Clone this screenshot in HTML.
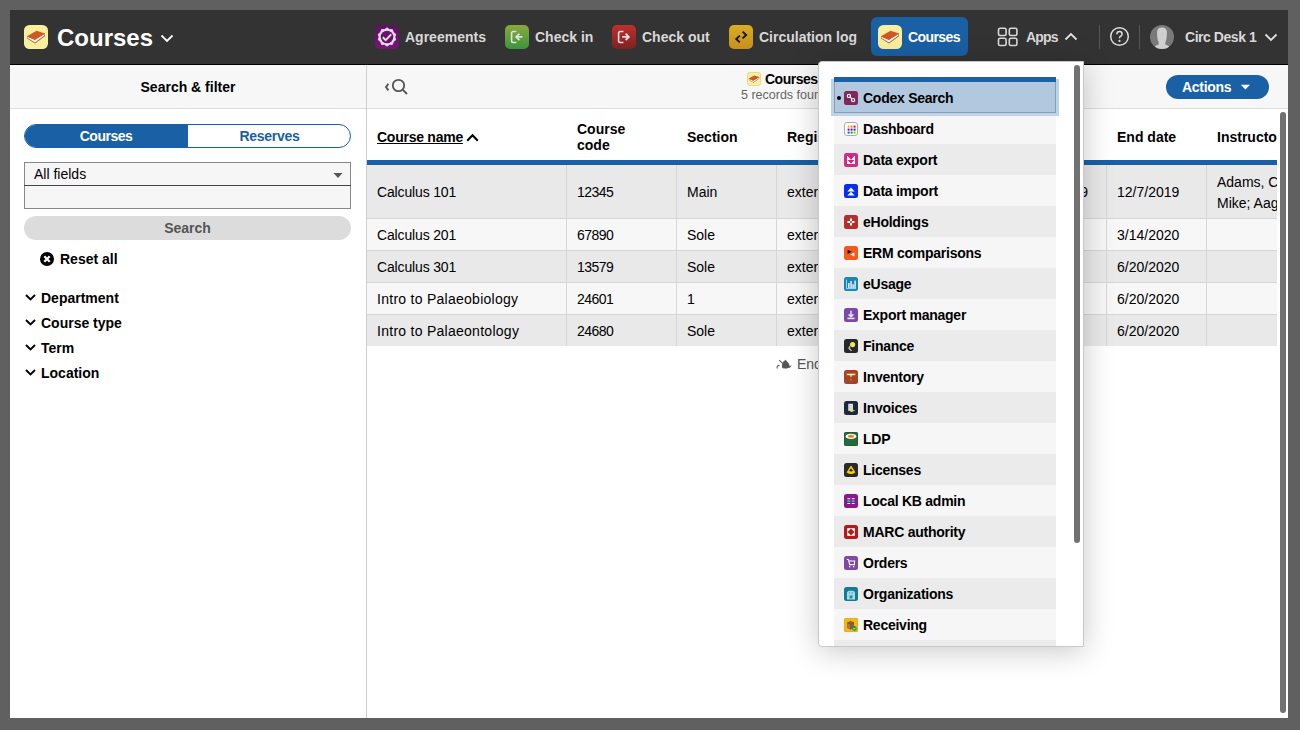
<!DOCTYPE html>
<html><head><meta charset="utf-8">
<style>
*{box-sizing:border-box;margin:0;padding:0}
html,body{width:1300px;height:730px;overflow:hidden;background:#606060;font-family:"Liberation Sans",sans-serif;font-size:14px;color:#000}
.abs{position:absolute}
.t{position:absolute;white-space:nowrap;line-height:20px}
.b{font-weight:700}
#nav{position:absolute;left:10px;top:10px;width:1278px;height:55px;background:#333;border-bottom:1px solid #000}
.navtxt{color:#d8d8d8;font-weight:700;font-size:14px}
.icon24{position:absolute;width:24px;height:24px}
#left{position:absolute;left:10px;top:65px;width:356px;height:653px;background:#fff}
#lhead{position:absolute;left:0;top:0;width:356px;height:44px;background:#f7f7f7;border-bottom:1px solid #ddd}
#divider{position:absolute;left:366px;top:65px;width:1px;height:653px;background:#cfcfcf}
#right{position:absolute;left:367px;top:65px;width:921px;height:653px;background:#fff;overflow:hidden}
#rhead{position:absolute;left:0;top:0;width:921px;height:44px;background:#f7f7f7;border-bottom:1px solid #ddd}
</style></head><body>
<div id="nav">
<div class="icon24" style="left:14px;top:15px"><svg width="24" height="24" viewBox="0 0 24 24"><rect x="0" y="0" width="24" height="24" rx="5.5" fill="#f8f09c"/><path d="M2.9 11.4 L3.1 13.4 L11 18.4 L21 11.2 L20.9 8.6 Z" fill="#b8572c"/><path d="M3.3 11.8 L3.5 13.1 L11 17.5 L20.5 10.6 L20.5 9 L10.9 14.5 Z" fill="#eef2f6"/><path d="M2.9 11.2 L12.6 5.8 L21 8.4 L10.8 14.9 Z" fill="#cf5821"/></svg></div>
<div class="t b" style="left:47px;top:13px;font-size:24px;line-height:30px;color:#fff">Courses</div>
<svg class="abs" style="left:150px;top:24px" width="14" height="9" viewBox="0 0 14 9"><path d="M1.5 1.5 L7 7 L12.5 1.5" fill="none" stroke="#fff" stroke-width="1.8"/></svg>

<div class="icon24" style="left:365px;top:15px"><svg width="24" height="24" viewBox="0 0 24 24"><defs><linearGradient id="gag" x1="0" y1="0" x2="0" y2="1"><stop offset="0" stop-color="#5c1360"/><stop offset="1" stop-color="#7a1279"/></linearGradient></defs><rect width="24" height="24" rx="5" fill="url(#gag)"/><path d="M12.00 2.80 L14.44 4.49 L17.41 4.56 L18.39 7.36 L20.75 9.16 L19.90 12.00 L20.75 14.84 L18.39 16.64 L17.41 19.44 L14.44 19.51 L12.00 21.20 L9.56 19.51 L6.59 19.44 L5.61 16.64 L3.25 14.84 L4.10 12.00 L3.25 9.16 L5.61 7.36 L6.59 4.56 L9.56 4.49 Z" fill="#e4dee4" stroke="#e4dee4" stroke-width="0.8" stroke-linejoin="round"/><circle cx="12" cy="12" r="6.3" fill="#6a136e"/><path d="M7.8 12.2 L10.7 15.1 L16.2 9.4" fill="none" stroke="#e4dee4" stroke-width="2"/></svg></div>
<div class="t navtxt" style="left:395px;top:17px">Agreements</div>

<div class="icon24" style="left:495px;top:15px"><svg width="24" height="24" viewBox="0 0 24 24"><defs><linearGradient id="gci" x1="0" y1="0" x2="0" y2="1"><stop offset="0" stop-color="#8aa83c"/><stop offset="1" stop-color="#3a963c"/></linearGradient></defs><rect width="24" height="24" rx="5" fill="url(#gci)"/><path d="M11.4 6.5 L8.3 6.5 Q6.6 6.5 6.6 8.2 L6.6 15.8 Q6.6 17.5 8.3 17.5 L11.4 17.5" fill="none" stroke="#e0e0e0" stroke-width="1.6"/><path d="M17.4 11.9 L11.2 11.9 M14.4 8.6 L11.1 11.9 L14.4 15.2" fill="none" stroke="#e0e0e0" stroke-width="1.8"/></svg></div>
<div class="t navtxt" style="left:525px;top:17px">Check in</div>

<div class="icon24" style="left:602px;top:15px"><svg width="24" height="24" viewBox="0 0 24 24"><defs><linearGradient id="gco" x1="0" y1="0" x2="0" y2="1"><stop offset="0" stop-color="#c22e2e"/><stop offset="1" stop-color="#7c2222"/></linearGradient></defs><rect width="24" height="24" rx="5" fill="url(#gco)"/><path d="M11.4 6.5 L8.3 6.5 Q6.6 6.5 6.6 8.2 L6.6 15.8 Q6.6 17.5 8.3 17.5 L11.4 17.5" fill="none" stroke="#e0e0e0" stroke-width="1.6"/><path d="M10.2 11.9 L16.8 11.9 M13.6 8.6 L16.9 11.9 L13.6 15.2" fill="none" stroke="#e0e0e0" stroke-width="1.8"/></svg></div>
<div class="t navtxt" style="left:632px;top:17px">Check out</div>

<div class="icon24" style="left:719px;top:15px"><svg width="24" height="24" viewBox="0 0 24 24"><defs><linearGradient id="gcl" x1="0" y1="0" x2="0" y2="1"><stop offset="0" stop-color="#d8ad26"/><stop offset="1" stop-color="#c98f1a"/></linearGradient></defs><rect width="24" height="24" rx="5" fill="url(#gcl)"/><path d="M10.8 10.6 L7.2 14 L10.8 17.4" fill="none" stroke="#111" stroke-width="1.8"/><path d="M13.6 6.6 L17.2 10 L13.6 13.4" fill="none" stroke="#111" stroke-width="1.8"/></svg></div>
<div class="t navtxt" style="left:749px;top:17px">Circulation log</div>

<div class="abs" style="left:861px;top:7px;width:97px;height:39px;background:#1960a4;border-radius:6px"></div>
<div class="icon24" style="left:868px;top:15px"><svg width="24" height="24" viewBox="0 0 24 24"><rect x="0" y="0" width="24" height="24" rx="5.5" fill="#f8f09c"/><path d="M2.9 11.4 L3.1 13.4 L11 18.4 L21 11.2 L20.9 8.6 Z" fill="#b8572c"/><path d="M3.3 11.8 L3.5 13.1 L11 17.5 L20.5 10.6 L20.5 9 L10.9 14.5 Z" fill="#eef2f6"/><path d="M2.9 11.2 L12.6 5.8 L21 8.4 L10.8 14.9 Z" fill="#cf5821"/></svg></div>
<div class="t b" style="left:898px;top:17px;color:#fff;letter-spacing:-0.6px">Courses</div>

<svg class="abs" style="left:987px;top:17px" width="22" height="20" viewBox="0 0 22 20"><g fill="none" stroke="#d9d9d9" stroke-width="1.6"><rect x="1.5" y="1.3" width="7.6" height="7.2" rx="1.6"/><rect x="12.3" y="1.3" width="7.6" height="7.2" rx="1.6"/><rect x="1.5" y="11.3" width="7.6" height="7.2" rx="1.6"/><rect x="12.3" y="11.3" width="7.6" height="7.2" rx="1.6"/></g></svg>
<div class="t navtxt" style="left:1016px;top:17px;letter-spacing:-0.8px">Apps</div>
<svg class="abs" style="left:1054px;top:22px" width="14" height="9" viewBox="0 0 14 9"><path d="M1.5 7.5 L7 2 L12.5 7.5" fill="none" stroke="#e0e0e0" stroke-width="1.8"/></svg>

<div class="abs" style="left:1089px;top:15px;width:1px;height:24px;background:#555"></div>
<svg class="abs" style="left:1099px;top:16px" width="21" height="21" viewBox="0 0 21 21"><circle cx="10.5" cy="10.5" r="8.8" fill="none" stroke="#ddd" stroke-width="1.5"/><path d="M7.9 8.3 Q7.9 5.6 10.5 5.6 Q13.1 5.6 13.1 8 Q13.1 9.5 11.6 10.2 Q10.5 10.8 10.5 12.2" fill="none" stroke="#ddd" stroke-width="1.5"/><circle cx="10.5" cy="14.9" r="1.1" fill="#ddd"/></svg>
<div class="abs" style="left:1129px;top:15px;width:1px;height:24px;background:#555"></div>
<svg class="abs" style="left:1140px;top:15px" width="24" height="24" viewBox="0 0 24 24"><defs><clipPath id="avc"><circle cx="12" cy="12" r="12"/></clipPath></defs><circle cx="12" cy="12" r="12" fill="#7a7a7a"/><g clip-path="url(#avc)" fill="#cfcfcf"><path d="M7 8 Q7 2.6 12 2.6 Q17 2.6 17 8 L16.6 13 Q16.2 15.8 15.3 17.4 L15.4 19.8 Q19.6 20.6 20.8 24 L3.2 24 Q4.4 20.6 8.6 19.8 L8.7 17.4 Q7.8 15.8 7.4 13 Z"/></g></svg>
<div class="t navtxt" style="left:1175px;top:17px;letter-spacing:-0.45px">Circ Desk 1</div>
<svg class="abs" style="left:1254px;top:23px" width="14" height="9" viewBox="0 0 14 9"><path d="M1.5 1.5 L7 7 L12.5 1.5" fill="none" stroke="#e0e0e0" stroke-width="1.8"/></svg>
</div>
<div id="left"><div id="lhead"></div></div>
<div class="t b" style="left:10px;width:356px;text-align:center;top:77px">Search &amp; filter</div>
<div class="abs" style="left:24px;top:124px;width:327px;height:24px;border:1px solid #1960a4;border-radius:12px;overflow:hidden;background:#fff"><div class="abs" style="left:0;top:0;width:163px;height:24px;background:#1960a4"></div></div>
<div class="t b" style="left:24px;width:164px;text-align:center;top:126px;color:#fff;letter-spacing:-0.5px">Courses</div>
<div class="t b" style="left:188px;width:163px;text-align:center;top:126px;color:#1960a4;letter-spacing:-0.3px">Reserves</div>
<div class="abs" style="left:24px;top:162px;width:327px;height:47px;border:1px solid #888;background:#f6f6f6"></div>
<div class="abs" style="left:24px;top:185px;width:327px;height:1px;background:#444"></div>
<div class="t" style="left:34px;top:164px;color:#000">All fields</div>
<svg class="abs" style="left:333px;top:172px" width="10" height="7" viewBox="0 0 10 7"><path d="M0.5 1 L9.5 1 L5 6 Z" fill="#555"/></svg>
<div class="abs" style="left:24px;top:216px;width:327px;height:24px;border-radius:12px;background:#dcdcdc"></div>
<div class="t b" style="left:24px;width:327px;text-align:center;top:218px;color:#555">Search</div>
<svg class="abs" style="left:40px;top:252px" width="14" height="14" viewBox="0 0 14 14"><circle cx="7" cy="7" r="7" fill="#000"/><path d="M4.3 4.3 L9.7 9.7 M9.7 4.3 L4.3 9.7" stroke="#fff" stroke-width="2.2"/></svg>
<div class="t b" style="left:60px;top:249px">Reset all</div>
<svg class="abs" style="left:25px;top:294px" width="11" height="7" viewBox="0 0 11 7"><path d="M1 1 L5.5 5.5 L10 1" fill="none" stroke="#000" stroke-width="1.9"/></svg>
<div class="t b" style="left:41px;top:288px">Department</div>
<svg class="abs" style="left:25px;top:319px" width="11" height="7" viewBox="0 0 11 7"><path d="M1 1 L5.5 5.5 L10 1" fill="none" stroke="#000" stroke-width="1.9"/></svg>
<div class="t b" style="left:41px;top:313px">Course type</div>
<svg class="abs" style="left:25px;top:344px" width="11" height="7" viewBox="0 0 11 7"><path d="M1 1 L5.5 5.5 L10 1" fill="none" stroke="#000" stroke-width="1.9"/></svg>
<div class="t b" style="left:41px;top:338px">Term</div>
<svg class="abs" style="left:25px;top:369px" width="11" height="7" viewBox="0 0 11 7"><path d="M1 1 L5.5 5.5 L10 1" fill="none" stroke="#000" stroke-width="1.9"/></svg>
<div class="t b" style="left:41px;top:363px">Location</div>

<div id="divider"></div>
<div id="divider"></div>
<div id="right"><div id="rhead"></div>
<svg class="abs" style="left:16px;top:12px" width="28" height="20" viewBox="0 0 28 20"><path d="M5.4 6.8 L3 10.1 L5.4 13.4" fill="none" stroke="#555" stroke-width="1.9"/><circle cx="15.5" cy="8.5" r="5.7" fill="none" stroke="#555" stroke-width="1.8"/><path d="M19.6 12.6 L24 17" stroke="#555" stroke-width="1.9"/></svg>
<div class="abs" style="left:380px;top:7px;width:14px;height:14px"><svg width="14" height="14" viewBox="0 0 24 24"><rect x="0.6" y="0.6" width="22.8" height="22.8" rx="5" fill="#f8f09c" stroke="#d9c978" stroke-width="1.2"/><path d="M2.9 11.4 L3.1 13.4 L11 18.4 L21 11.2 L20.9 8.6 Z" fill="#b8572c"/><path d="M3.3 11.8 L3.5 13.1 L11 17.5 L20.5 10.6 L20.5 9 L10.9 14.5 Z" fill="#eef2f6"/><path d="M2.9 11.2 L12.6 5.8 L21 8.4 L10.8 14.9 Z" fill="#cf5821"/></svg></div>
<div class="t" style="left:398px;top:4px;font-weight:700;letter-spacing:-0.5px">Courses</div>
<div class="t" style="left:374px;top:20px;font-size:12.5px;color:#666">5 records found</div>
<div class="abs" style="left:799px;top:10px;width:103px;height:24px;background:#1960a4;border-radius:12px"></div>
<div class="t" style="left:815px;top:12px;font-weight:700;color:#fff;letter-spacing:-0.3px">Actions</div>
<svg class="abs" style="left:873px;top:19px" width="11" height="7" viewBox="0 0 11 7"><path d="M0.8 0.8 L10 0.8 L5.4 5.6 Z" fill="#fff"/></svg>
<div class="abs" style="left:0;top:0;width:910px;height:653px;overflow:hidden">
<div class="t" style="left:10px;top:62px;font-weight:700;text-decoration:underline;letter-spacing:-0.25px">Course name</div>
<svg class="abs" style="left:99px;top:68px" width="13" height="9" viewBox="0 0 13 9"><path d="M1.2 7.8 L6.5 2.2 L11.8 7.8" fill="none" stroke="#000" stroke-width="2"/></svg>
<div class="t" style="left:210px;top:56px;font-weight:700;line-height:16px">Course<br>code</div>
<div class="t" style="left:320px;top:62px;font-weight:700">Section</div>
<div class="t" style="left:420px;top:62px;font-weight:700">Registrar ID</div>
<div class="t" style="left:550px;top:62px;font-weight:700">Number of reserves</div>
<div class="t" style="left:650px;top:62px;font-weight:700">Start date</div>
<div class="t" style="left:750px;top:62px;font-weight:700">End date</div>
<div class="t" style="left:850px;top:62px;font-weight:700">Instructors</div>
<div class="abs" style="left:0px;top:95px;width:910px;height:5px;background:#1960a4"></div>
<div class="abs" style="left:0px;top:100px;width:910px;height:54px;background:#e9e9e9;border-bottom:1px solid #d6d6d6;"></div>
<div class="t" style="left:10px;top:117px;letter-spacing:-0.15px">Calculus 101</div>
<div class="t" style="left:210px;top:117px;letter-spacing:-0.55px">12345</div>
<div class="t" style="left:320px;top:117px;">Main</div>
<div class="t" style="left:420px;top:117px;">external-1</div>
<div class="t" style="left:750px;top:117px;">12/7/2019</div>
<div class="t" style="left:850px;top:107px;line-height:21px">Adams, Chris;<br>Mike; Aaglund</div>
<div class="t" style="left:621px;width:100px;text-align:right;top:117px">10/12/2019</div>
<div class="abs" style="left:0px;top:154px;width:910px;height:32px;background:#f7f7f7;border-bottom:1px solid #d6d6d6;"></div>
<div class="t" style="left:10px;top:160px;letter-spacing:-0.15px">Calculus 201</div>
<div class="t" style="left:210px;top:160px;letter-spacing:-0.55px">67890</div>
<div class="t" style="left:320px;top:160px;">Sole</div>
<div class="t" style="left:420px;top:160px;">external-2</div>
<div class="t" style="left:750px;top:160px;">3/14/2020</div>
<div class="abs" style="left:0px;top:186px;width:910px;height:32px;background:#e9e9e9;border-bottom:1px solid #d6d6d6;"></div>
<div class="t" style="left:10px;top:192px;letter-spacing:-0.15px">Calculus 301</div>
<div class="t" style="left:210px;top:192px;letter-spacing:-0.55px">13579</div>
<div class="t" style="left:320px;top:192px;">Sole</div>
<div class="t" style="left:420px;top:192px;">external-3</div>
<div class="t" style="left:750px;top:192px;">6/20/2020</div>
<div class="abs" style="left:0px;top:218px;width:910px;height:32px;background:#f7f7f7;border-bottom:1px solid #d6d6d6;"></div>
<div class="t" style="left:10px;top:224px;letter-spacing:0.27px">Intro to Palaeobiology</div>
<div class="t" style="left:210px;top:224px;letter-spacing:-0.55px">24601</div>
<div class="t" style="left:320px;top:224px;">1</div>
<div class="t" style="left:420px;top:224px;">external-4</div>
<div class="t" style="left:750px;top:224px;">6/20/2020</div>
<div class="abs" style="left:0px;top:250px;width:910px;height:31px;background:#e9e9e9;"></div>
<div class="t" style="left:10px;top:256px;letter-spacing:0.27px">Intro to Palaeontology</div>
<div class="t" style="left:210px;top:256px;letter-spacing:-0.55px">24680</div>
<div class="t" style="left:320px;top:256px;">Sole</div>
<div class="t" style="left:420px;top:256px;">external-5</div>
<div class="t" style="left:750px;top:256px;">6/20/2020</div>
<div class="abs" style="left:199px;top:100px;width:1px;height:181px;background:#d6d6d6"></div>
<div class="abs" style="left:309px;top:100px;width:1px;height:181px;background:#d6d6d6"></div>
<div class="abs" style="left:409px;top:100px;width:1px;height:181px;background:#d6d6d6"></div>
<div class="abs" style="left:539px;top:100px;width:1px;height:181px;background:#d6d6d6"></div>
<div class="abs" style="left:639px;top:100px;width:1px;height:181px;background:#d6d6d6"></div>
<div class="abs" style="left:739px;top:100px;width:1px;height:181px;background:#d6d6d6"></div>
<div class="abs" style="left:839px;top:100px;width:1px;height:181px;background:#d6d6d6"></div>
</div>
<svg class="abs" style="left:409px;top:293px" width="17" height="12" viewBox="0 0 17 12"><path d="M1.2 10.5 Q0.5 7.5 3.5 7.4 M3.2 2 Q5 4.2 6.5 5" fill="none" stroke="#555" stroke-width="1.1"/><path d="M6.4 9.8 Q5.6 5 8.2 3.2 Q9.5 1.5 10.8 3.4 Q13 5.5 13.5 9 Q11 11 6.4 9.8Z M13 9.5 Q15 9.2 15.2 7.5" fill="#555" stroke="#555" stroke-width="0.8"/></svg>
<div class="t" style="left:430px;top:289px;color:#555">End of list</div>
<div class="abs" style="left:913px;top:47px;width:6px;height:601px;background:#717171;border-radius:3px"></div>
</div>
<div class="abs" style="left:818px;top:61px;width:266px;height:586px;background:#fff;border:1px solid #c8c8c8;border-radius:4px 0 0 4px;box-shadow:0 4px 30px rgba(0,0,0,0.22);overflow:hidden">
<div class="abs" style="left:15px;top:20px;width:222px;height:31px;background:#ebebeb"></div>
<div class="abs" style="left:15px;top:51px;width:222px;height:31px;background:#f6f6f6"></div>
<div class="abs" style="left:15px;top:82px;width:222px;height:31px;background:#ebebeb"></div>
<div class="abs" style="left:15px;top:113px;width:222px;height:31px;background:#f6f6f6"></div>
<div class="abs" style="left:15px;top:144px;width:222px;height:31px;background:#ebebeb"></div>
<div class="abs" style="left:15px;top:175px;width:222px;height:31px;background:#f6f6f6"></div>
<div class="abs" style="left:15px;top:206px;width:222px;height:31px;background:#ebebeb"></div>
<div class="abs" style="left:15px;top:237px;width:222px;height:31px;background:#f6f6f6"></div>
<div class="abs" style="left:15px;top:268px;width:222px;height:31px;background:#ebebeb"></div>
<div class="abs" style="left:15px;top:299px;width:222px;height:31px;background:#f6f6f6"></div>
<div class="abs" style="left:15px;top:330px;width:222px;height:31px;background:#ebebeb"></div>
<div class="abs" style="left:15px;top:361px;width:222px;height:31px;background:#f6f6f6"></div>
<div class="abs" style="left:15px;top:392px;width:222px;height:31px;background:#ebebeb"></div>
<div class="abs" style="left:15px;top:423px;width:222px;height:31px;background:#f6f6f6"></div>
<div class="abs" style="left:15px;top:454px;width:222px;height:31px;background:#ebebeb"></div>
<div class="abs" style="left:15px;top:485px;width:222px;height:31px;background:#f6f6f6"></div>
<div class="abs" style="left:15px;top:516px;width:222px;height:31px;background:#ebebeb"></div>
<div class="abs" style="left:15px;top:547px;width:222px;height:31px;background:#f6f6f6"></div>
<div class="abs" style="left:15px;top:578px;width:222px;height:31px;background:#ebebeb"></div>
<div class="abs" style="left:12px;top:17px;width:228px;height:37px;border:3px solid #bcd3ea"></div>
<div class="abs" style="left:15px;top:19px;width:222px;height:32px;background:#b2c8df;border:1px solid #8d9db0"></div>
<div class="abs" style="left:15px;top:15px;width:222px;height:5px;background:#1960a4"></div>
<div class="abs" style="left:18px;top:34px;width:4px;height:4px;border-radius:2px;background:#000"></div>
<svg class="abs" style="left:25px;top:29px" width="14" height="14" viewBox="0 0 14 14"><rect width="14" height="14" rx="2.5" fill="#82275a"/><path d="M5.4 5.4 L8.6 8.6" stroke="#fff" stroke-width="1.1"/><circle cx="4.9" cy="4.9" r="1.6" fill="#82275a" stroke="#fff" stroke-width="1.2"/><circle cx="9.1" cy="9.1" r="1.6" fill="#82275a" stroke="#fff" stroke-width="1.2"/></svg>
<div class="t b" style="left:44px;top:26px;letter-spacing:-0.25px">Codex Search</div>
<svg class="abs" style="left:25px;top:60px" width="14" height="14" viewBox="0 0 14 14"><rect x="0.5" y="0.5" width="13" height="13" rx="2.5" fill="#fff" stroke="#aaa"/><rect x="3.6" y="3.6" width="2" height="2" fill="#fdb000"/><rect x="6.6" y="3.6" width="2" height="2" fill="#f98a00"/><rect x="9.6" y="3.6" width="2" height="2" fill="#e8002a"/><rect x="3.6" y="6.6" width="2" height="2" fill="#a0008f"/><rect x="6.6" y="6.6" width="2" height="2" fill="#5a0fa0"/><rect x="9.6" y="6.6" width="2" height="2" fill="#0040b0"/><rect x="3.6" y="9.6" width="2" height="2" fill="#0066cc"/><rect x="6.6" y="9.6" width="2" height="2" fill="#00a030"/><rect x="9.6" y="9.6" width="2" height="2" fill="#90c800"/></svg>
<div class="t b" style="left:44px;top:57px;letter-spacing:-0.25px">Dashboard</div>
<svg class="abs" style="left:25px;top:91px" width="14" height="14" viewBox="0 0 14 14"><rect width="14" height="14" rx="2.5" fill="#d42a86"/><rect x="3" y="3" width="8" height="8" fill="#fff"/><path d="M3.6 3 L10.4 3 L7 7 Z M3.6 7 L10.4 7 L7 10.8 Z" fill="#d4227e"/></svg>
<div class="t b" style="left:44px;top:88px;letter-spacing:-0.25px">Data export</div>
<svg class="abs" style="left:25px;top:122px" width="14" height="14" viewBox="0 0 14 14"><rect width="14" height="14" rx="2.5" fill="#0a2ef0"/><path d="M7 3.4 L10.6 7.6 L3.4 7.6 Z M7 7.8 L10.6 11.4 L3.4 11.4 Z" fill="#fff"/></svg>
<div class="t b" style="left:44px;top:119px;letter-spacing:-0.25px">Data import</div>
<svg class="abs" style="left:25px;top:153px" width="14" height="14" viewBox="0 0 14 14"><rect width="14" height="14" rx="2.5" fill="#b52e2e"/><path d="M6 3.5 h2 v2.5 h2.5 v2 h-2.5 v2.5 h-2 v-2.5 h-2.5 v-2 h2.5z" fill="#fff"/><circle cx="7" cy="7" r="0.9" fill="#b00"/></svg>
<div class="t b" style="left:44px;top:150px;letter-spacing:-0.25px">eHoldings</div>
<svg class="abs" style="left:25px;top:184px" width="14" height="14" viewBox="0 0 14 14"><rect width="14" height="14" rx="2.5" fill="#f25a1e"/><path d="M3.6 3.8 L7.8 5.8 L3.6 8 Z" fill="#111"/><path d="M10.4 6.6 L10.4 10.6 L6.4 8.6 Z" fill="#fff"/></svg>
<div class="t b" style="left:44px;top:181px;letter-spacing:-0.25px">ERM comparisons</div>
<svg class="abs" style="left:25px;top:215px" width="14" height="14" viewBox="0 0 14 14"><rect width="14" height="14" rx="2.5" fill="#1a86b0"/><path d="M2.5 2.6 L2.5 11.6 L12 11.6" fill="none" stroke="#aee0f0" stroke-width="0.9"/><rect x="4.2" y="6" width="1.3" height="5" fill="#fff"/><rect x="6.4" y="4" width="1.3" height="7" fill="#fff"/><rect x="8.4" y="7.2" width="1.3" height="3.8" fill="#fff"/><rect x="10.4" y="3.6" width="1.3" height="7.4" fill="#fff"/></svg>
<div class="t b" style="left:44px;top:212px;letter-spacing:-0.25px">eUsage</div>
<svg class="abs" style="left:25px;top:246px" width="14" height="14" viewBox="0 0 14 14"><rect width="14" height="14" rx="2.5" fill="#7a48a8"/><path d="M7 2.8 L7 8.2 M4.6 6.4 L7 8.8 L9.4 6.4" fill="none" stroke="#e8e0f0" stroke-width="1.5"/><rect x="3.4" y="9.6" width="7.2" height="1.6" fill="#e8e0f0"/></svg>
<div class="t b" style="left:44px;top:243px;letter-spacing:-0.25px">Export manager</div>
<svg class="abs" style="left:25px;top:277px" width="14" height="14" viewBox="0 0 14 14"><rect width="14" height="14" rx="2.5" fill="#26292c"/><path d="M5.6 7.2 Q3.4 10.4 7.6 11.6 Q5 10.6 5.6 7.2Z" fill="#ccc" stroke="#ccc" stroke-width="0.8"/><circle cx="8.6" cy="5.6" r="2.6" fill="#f2e458"/></svg>
<div class="t b" style="left:44px;top:274px;letter-spacing:-0.25px">Finance</div>
<svg class="abs" style="left:25px;top:308px" width="14" height="14" viewBox="0 0 14 14"><rect width="14" height="14" rx="2.5" fill="#a2432a"/><path d="M2.6 3.6 L11.4 3.6 L11.4 5.2 L8.6 5.2 L7 7.6 L5.4 5.2 L2.6 5.2 Z" fill="#f0c050"/><rect x="3.6" y="4" width="6.8" height="0.9" fill="#fff8d0"/><rect x="6.2" y="9.4" width="1.6" height="1" fill="#e8a040"/></svg>
<div class="t b" style="left:44px;top:305px;letter-spacing:-0.25px">Inventory</div>
<svg class="abs" style="left:25px;top:339px" width="14" height="14" viewBox="0 0 14 14"><rect width="14" height="14" rx="2.5" fill="#1b2a3a"/><rect x="4.3" y="2.8" width="4.6" height="7" fill="#f2f2f6"/><path d="M5 4.6 h3 M5 6.2 h3 M5 7.8 h3" stroke="#aab" stroke-width="0.6"/><circle cx="7.6" cy="9.6" r="1.5" fill="#f0e040"/><path d="M9.2 8.6 L11 9.6 L9.6 10.6 Z" fill="#ddd"/></svg>
<div class="t b" style="left:44px;top:336px;letter-spacing:-0.25px">Invoices</div>
<svg class="abs" style="left:25px;top:370px" width="14" height="14" viewBox="0 0 14 14"><rect width="14" height="14" rx="2.5" fill="#226b3a" stroke="#333" stroke-width="0.6"/><ellipse cx="7" cy="4.4" rx="5.4" ry="2.6" fill="#fff"/><ellipse cx="7" cy="4.3" rx="3" ry="1.5" fill="#ff7a18"/></svg>
<div class="t b" style="left:44px;top:367px;letter-spacing:-0.25px">LDP</div>
<svg class="abs" style="left:25px;top:401px" width="14" height="14" viewBox="0 0 14 14"><rect width="14" height="14" rx="2.5" fill="#2a2a2a"/><path d="M7 3 L11 9.4 Q7 12 3 9.4 Z" fill="#ffd000" stroke="#ffd000" stroke-width="0.8" stroke-linejoin="round"/><path d="M7 5.3 L8.9 8.1 Q7 8.8 5.1 8.1 Z" fill="#1a1a2a"/></svg>
<div class="t b" style="left:44px;top:398px;letter-spacing:-0.25px">Licenses</div>
<svg class="abs" style="left:25px;top:432px" width="14" height="14" viewBox="0 0 14 14"><rect width="14" height="14" rx="2.5" fill="#8a1a8a"/><rect x="3.4" y="4.2" width="2.8" height="1" fill="#fff"/><rect x="7.8" y="4.2" width="2.8" height="1" fill="#fff"/><rect x="3.4" y="6.3" width="2.8" height="1.6" fill="#10d0e0"/><rect x="7.8" y="6.3" width="2.8" height="1.6" fill="#10d0e0"/><rect x="3.4" y="9" width="2.8" height="1" fill="#fff"/><rect x="7.8" y="9" width="2.8" height="1" fill="#fff"/></svg>
<div class="t b" style="left:44px;top:429px;letter-spacing:-0.25px">Local KB admin</div>
<svg class="abs" style="left:25px;top:463px" width="14" height="14" viewBox="0 0 14 14"><rect width="14" height="14" rx="2.5" fill="#b01c1c"/><rect x="3.2" y="3.2" width="7.6" height="7.6" fill="#fff"/><path d="M7 3.6 L10.4 7 L7 10.4 L3.6 7 Z" fill="#b01c1c"/></svg>
<div class="t b" style="left:44px;top:460px;letter-spacing:-0.25px">MARC authority</div>
<svg class="abs" style="left:25px;top:494px" width="14" height="14" viewBox="0 0 14 14"><rect width="14" height="14" rx="2.5" fill="#7d49a6"/><path d="M2.8 3.2 L4.6 3.8 L5.6 8.6 L10.4 8.6 L10.6 5 L5 5" fill="none" stroke="#fff" stroke-width="1.1"/><rect x="5" y="10" width="1.3" height="1.3" fill="#fff"/><rect x="9" y="10" width="1.3" height="1.3" fill="#fff"/></svg>
<div class="t b" style="left:44px;top:491px;letter-spacing:-0.25px">Orders</div>
<svg class="abs" style="left:25px;top:525px" width="14" height="14" viewBox="0 0 14 14"><rect width="14" height="14" rx="2.5" fill="#117d92"/><path d="M3 12 L3 5.2 L4.6 3.8 L9.4 3.8 L11 5.2 L11 12 Z" fill="#a6d8e0"/><path d="M5.6 12 L5.6 8.4 L8.4 8.4 L8.4 12 Z" fill="#1e8ea2"/><rect x="5" y="5" width="1.2" height="1.6" fill="#5fb4c4"/><rect x="7.8" y="5" width="1.2" height="1.6" fill="#5fb4c4"/><path d="M3 12 L11 12" stroke="#d8f0f4" stroke-width="0.8"/></svg>
<div class="t b" style="left:44px;top:522px;letter-spacing:-0.25px">Organizations</div>
<svg class="abs" style="left:25px;top:556px" width="14" height="14" viewBox="0 0 14 14"><rect width="14" height="14" rx="2.5" fill="#f4b814" stroke="#d89a08" stroke-width="0.6"/><path d="M3.2 4.6 L6.6 2.8 L10 4.4 L10 9.8 L6.6 11.6 L3.2 9.9 Z" fill="#8c623c"/><path d="M3.2 4.6 L6.6 6.4 L10 4.4 M6.6 6.4 L6.6 11.6" fill="none" stroke="#5e3e22" stroke-width="0.5"/><path d="M3.6 5.2 L6.2 6.6 L6.2 11 L3.6 9.6Z" fill="#a87a50"/><circle cx="10.4" cy="10.4" r="2.3" fill="#169a38"/><path d="M9.3 10.5 L10.2 11.2 L11.6 9.7" fill="none" stroke="#fff" stroke-width="0.8"/></svg>
<div class="t b" style="left:44px;top:553px;letter-spacing:-0.25px">Receiving</div>
<div class="t b" style="left:44px;top:584px;letter-spacing:-0.25px">Remote storage</div>
<div class="abs" style="left:255px;top:3px;width:6px;height:478px;background:#717171;border-radius:3px"></div>
</div>
</body></html>
